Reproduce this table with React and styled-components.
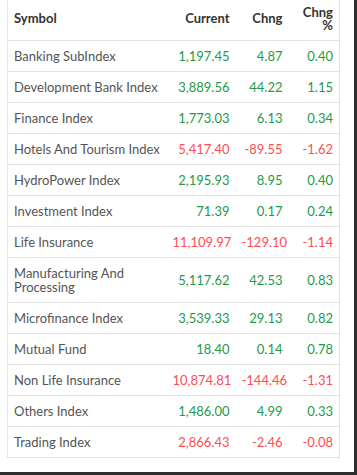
import React from 'react';
import styled, { createGlobalStyle } from 'styled-components';

const GlobalStyle = createGlobalStyle`
  html, body {
    margin: 0;
    padding: 0;
    background: #2e2e2e;
  }
`;

const rows = [
  { symbol: 'Banking SubIndex', current: '1,197.45', chng: '4.87', pct: '0.40' },
  { symbol: 'Development Bank Index', current: '3,889.56', chng: '44.22', pct: '1.15' },
  { symbol: 'Finance Index', current: '1,773.03', chng: '6.13', pct: '0.34' },
  { symbol: 'Hotels And Tourism Index', current: '5,417.40', chng: '-89.55', pct: '-1.62' },
  { symbol: 'HydroPower Index', current: '2,195.93', chng: '8.95', pct: '0.40' },
  { symbol: 'Investment Index', current: '71.39', chng: '0.17', pct: '0.24' },
  { symbol: 'Life Insurance', current: '11,109.97', chng: '-129.10', pct: '-1.14' },
  { symbol: 'Manufacturing And Processing', current: '5,117.62', chng: '42.53', pct: '0.83' },
  { symbol: 'Microfinance Index', current: '3,539.33', chng: '29.13', pct: '0.82' },
  { symbol: 'Mutual Fund', current: '18.40', chng: '0.14', pct: '0.78' },
  { symbol: 'Non Life Insurance', current: '10,874.81', chng: '-144.46', pct: '-1.31' },
  { symbol: 'Others Index', current: '1,486.00', chng: '4.99', pct: '0.33' },
  { symbol: 'Trading Index', current: '2,866.43', chng: '-2.46', pct: '-0.08' },
];

const App = () => (
  <>
    <GlobalStyle />
    <Page>
      <Table>
        <colgroup>
          <col style={{ width: 159 }} />
          <col style={{ width: 69 }} />
          <col style={{ width: 53 }} />
          <col style={{ width: 51 }} />
        </colgroup>
        <thead>
          <tr>
            <HeadCell>Symbol</HeadCell>
            <HeadCell $right>Current</HeadCell>
            <HeadCell $right>Chng</HeadCell>
            <HeadCell $right>Chng<br />%</HeadCell>
          </tr>
        </thead>
        <tbody>
          {rows.map((r) => {
            const down = r.chng.startsWith('-');
            return (
              <Row key={r.symbol} $tall={r.symbol.length > 26}>
                <SymbolCell>{r.symbol}</SymbolCell>
                <NumCell $down={down}>{r.current}</NumCell>
                <NumCell $down={down}>{r.chng}</NumCell>
                <NumCell $down={down}>{r.pct}</NumCell>
              </Row>
            );
          })}
        </tbody>
      </Table>
    </Page>
  </>
);

export default App;

const Page = styled.div`
  width: 354px;
  height: 472px;
  background: #fff;
  box-sizing: border-box;
  padding-left: 7px;
  overflow: hidden;
  font-family: 'Source Sans Pro', Lato, 'Liberation Sans', sans-serif;
  font-size: 13px;
`;

const Table = styled.table`
  width: 333px;
  border-collapse: collapse;
  table-layout: fixed;
  border-left: 1px solid #e2e2e2;
  border-right: 1px solid #e2e2e2;
  border-bottom: 1px solid #e2e2e2;
`;

const HeadCell = styled.th`
  height: 37px;
  padding: 0 6px 3px;
  text-align: ${(p) => (p.$right ? 'right' : 'left')};
  font-weight: 700;
  color: #333;
  line-height: 13px;
  border-bottom: 1px solid #e2e2e2;
  vertical-align: middle;
`;

const Row = styled.tr`
  height: ${(p) => (p.$tall ? '45px' : '31px')};
  border-bottom: 1px solid #e2e2e2;
`;

const SymbolCell = styled.td`
  padding: 0 6px;
  color: #555;
  line-height: 14px;
  vertical-align: middle;
`;

const NumCell = styled.td`
  padding: 0 6px;
  text-align: right;
  color: ${(p) => (p.$down ? '#ff4d4f' : '#1f9a48')};
  vertical-align: middle;
  white-space: nowrap;
`;
